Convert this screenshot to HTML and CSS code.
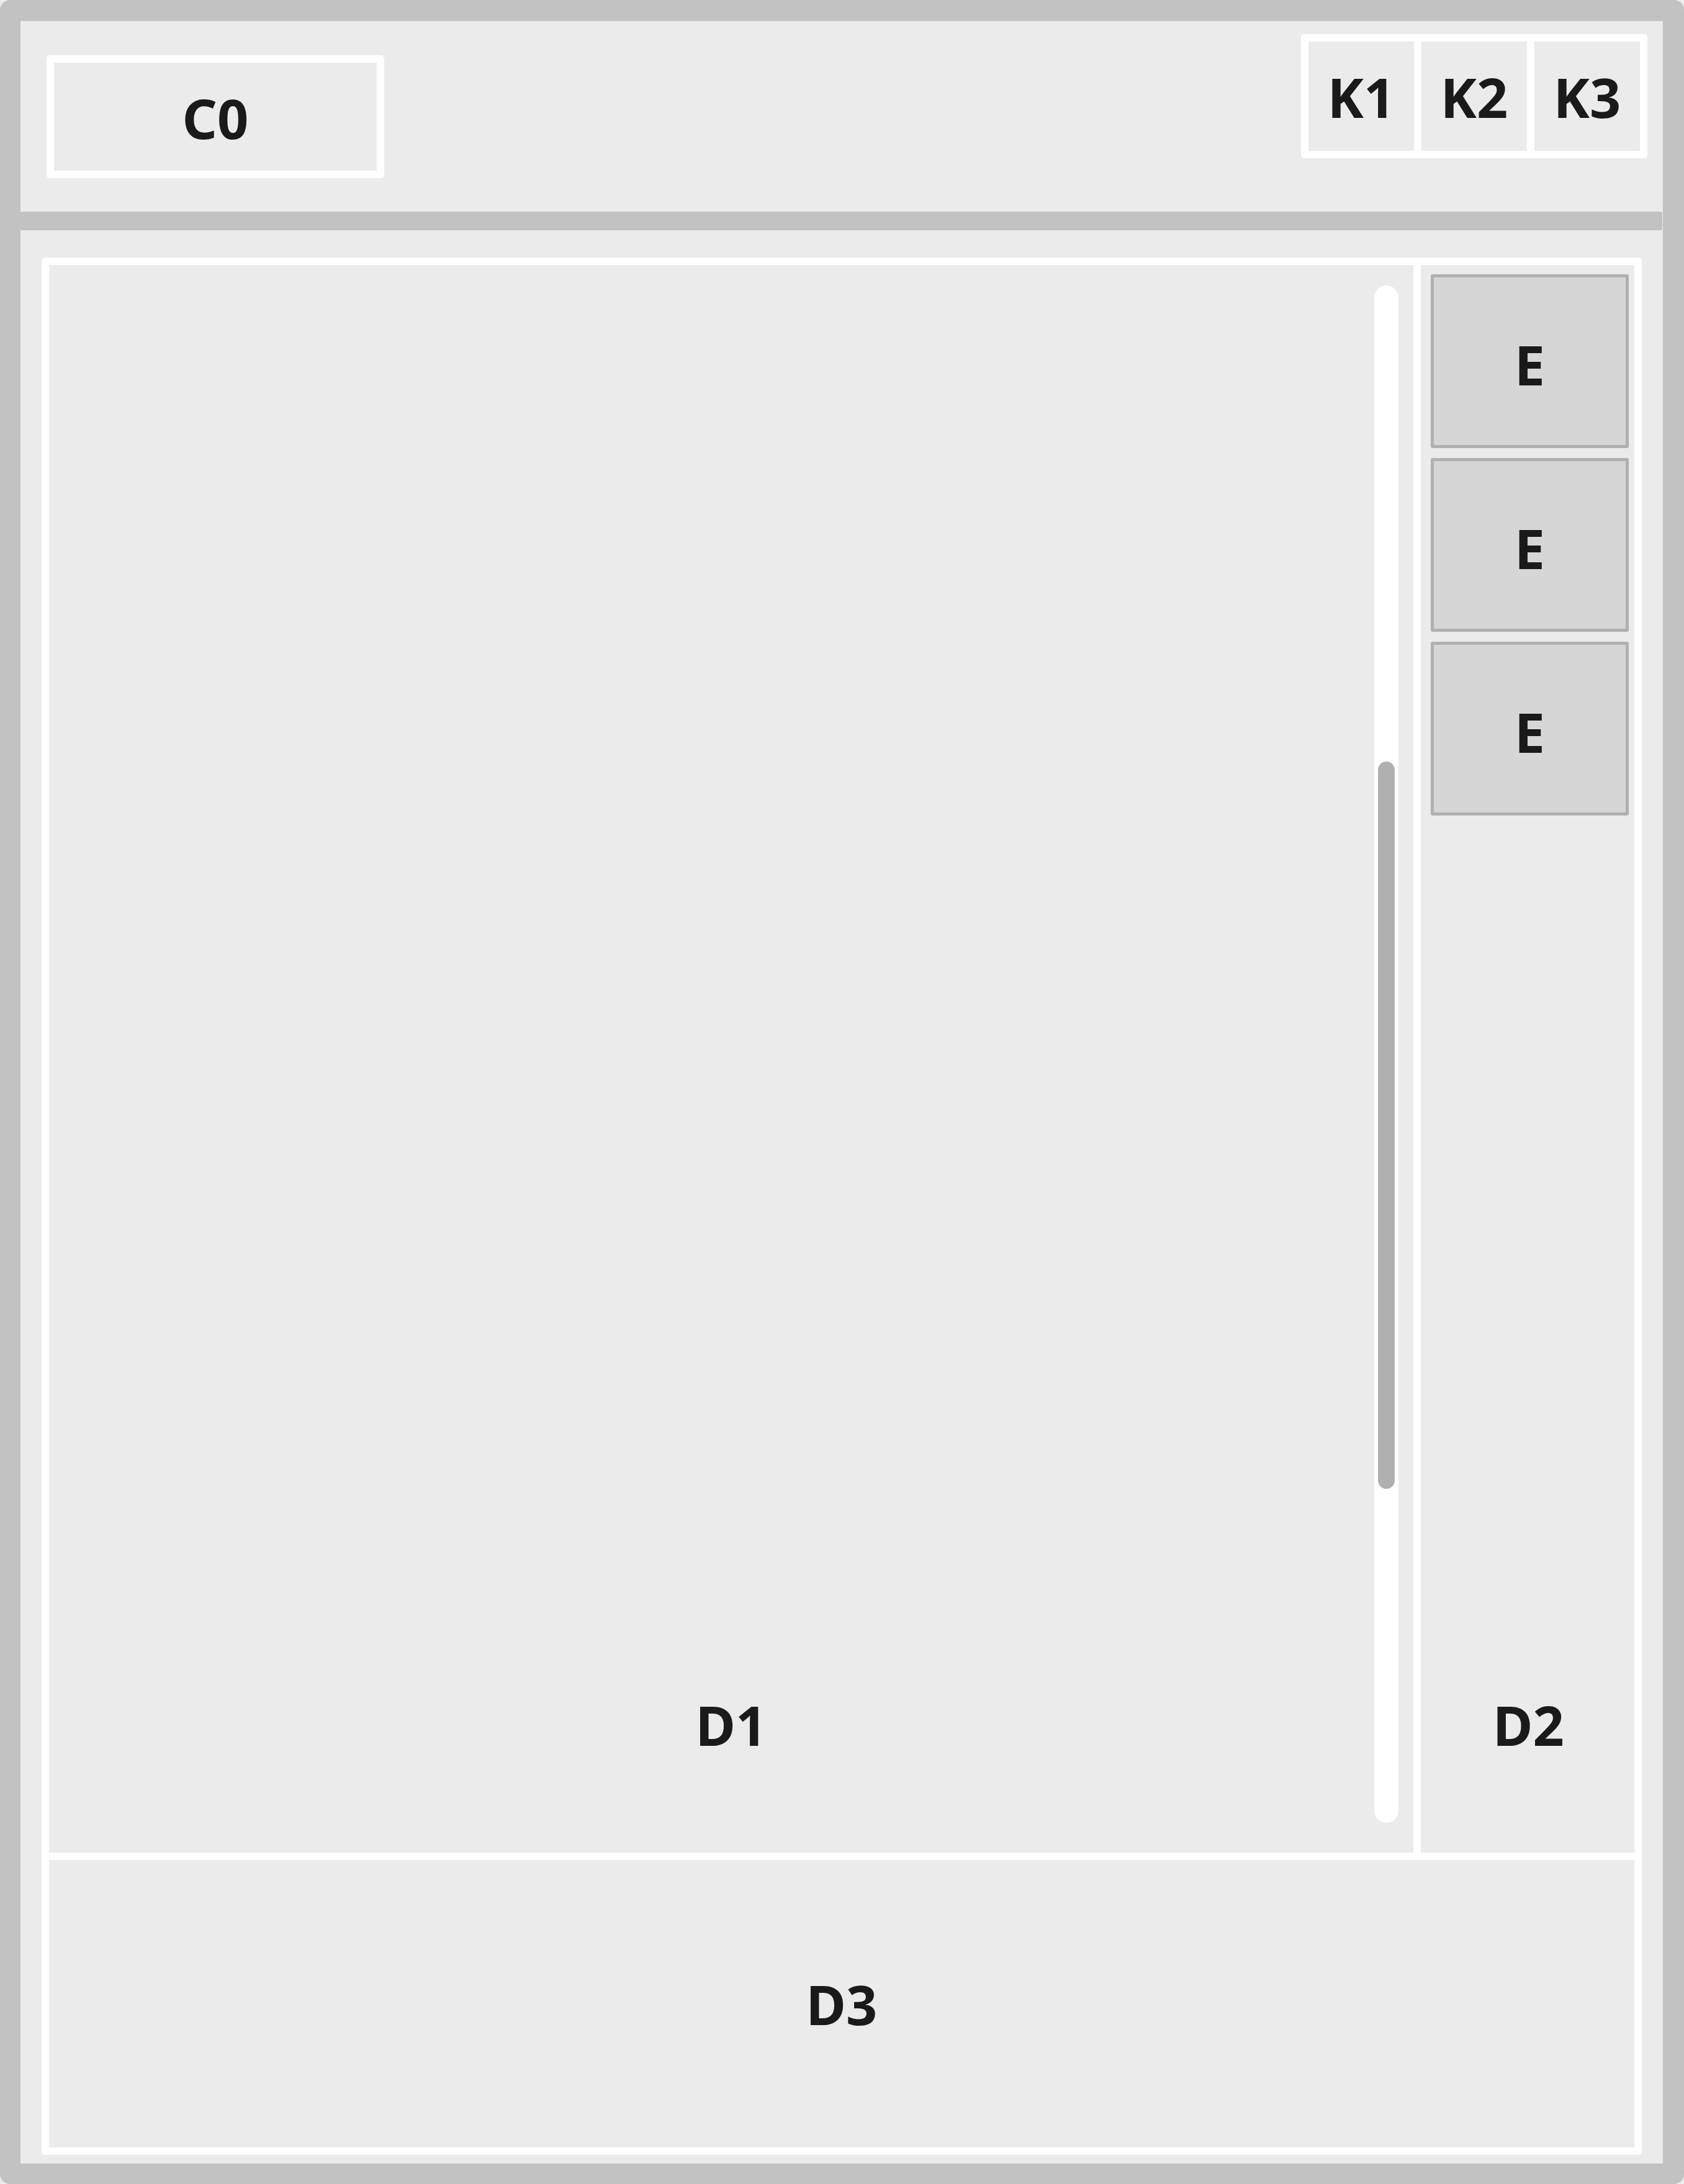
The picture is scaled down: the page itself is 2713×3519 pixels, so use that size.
FILE: index.html
```html
<!DOCTYPE html>
<html lang="en">
<head>
<meta charset="utf-8">
<title>Wireframe</title>
<link rel="stylesheet" href="styles.css">
</head>
<body>
<div class="frame">
  <header class="header">
    <div class="c0 label">C0</div>
    <div class="kgroup">
      <div class="kcell label">K1</div>
      <div class="kcell label">K2</div>
      <div class="kcell label">K3</div>
    </div>
  </header>
  <div class="bar"></div>
  <main class="main">
    <section class="d1">
      <div class="panel-label label">D1</div>
      <div class="track"><div class="thumb"></div></div>
    </section>
    <aside class="d2">
      <div class="ebox label">E</div>
      <div class="ebox label">E</div>
      <div class="ebox label">E</div>
      <div class="panel-label d2-label label">D2</div>
    </aside>
    <section class="d3">
      <div class="label">D3</div>
    </section>
  </main>
</div>
</body>
</html>
```

FILE: styles.css
```css
html, body {
  margin: 0;
  padding: 0;
  background: #ebebeb;
}

.frame {
  width: 2713px;
  height: 3519px;
  box-sizing: border-box;
  border-style: solid;
  border-color: #c2c2c2;
  border-width: 34px 34px 33px 33px;
  border-radius: 16px;
  background: #ebebeb;
  display: flex;
  flex-direction: column;
}

.label {
  font-family: "Noto Sans", "Open Sans", sans-serif;
  font-weight: 700;
  font-size: 88px;
  line-height: 1;
  color: #1a1a1a;
}

.header {
  height: 307px;
  flex: none;
  display: flex;
  justify-content: space-between;
  align-items: flex-start;
  padding: 0 25px 0 42px;
}

.c0 {
  margin-top: 55px;
  width: 544px;
  height: 198px;
  box-sizing: border-box;
  border: 12px solid #ffffff;
  border-radius: 5px;
  padding-top: 4px;
  display: flex;
  align-items: center;
  justify-content: center;
}

.kgroup {
  margin-top: 21px;
  width: 558px;
  height: 200px;
  box-sizing: border-box;
  padding: 12px;
  gap: 12px;
  background: #ffffff;
  border-radius: 5px;
  display: flex;
}

.kcell {
  flex: 1;
  background: #ebebeb;
  padding-top: 2px;
  display: flex;
  align-items: center;
  justify-content: center;
}

.bar {
  flex: none;
  height: 30px;
  margin-right: 1px;
  background: #c2c2c2;
  border-radius: 3px;
}

.main {
  flex: none;
  margin: 44px 34px 0 34px;
  height: 3057px;
  box-sizing: border-box;
  padding: 12px;
  background: #ffffff;
  border-radius: 5px;
  display: grid;
  grid-template-columns: 1fr 344px;
  grid-template-rows: 1fr 463px;
  gap: 12px;
}

.d1 {
  position: relative;
  background: #ebebeb;
  display: flex;
  flex-direction: column;
  justify-content: flex-end;
  align-items: center;
}

.panel-label {
  padding-bottom: 162px;
}

.track {
  position: absolute;
  top: 33px;
  right: 24px;
  width: 39px;
  height: 2477px;
  background: #ffffff;
  border-radius: 20px;
}

.thumb {
  position: absolute;
  top: 767px;
  left: 6px;
  width: 27px;
  height: 1172px;
  background: #b0b0b0;
  border-radius: 14px;
}

.d2 {
  background: #ebebeb;
  display: flex;
  flex-direction: column;
  gap: 16px;
  padding: 15px 9px 0 16px;
}

.ebox {
  flex: none;
  height: 280px;
  box-sizing: border-box;
  border: 5px solid #b0b0b0;
  border-radius: 3px;
  background: #d6d6d6;
  padding-top: 9px;
  display: flex;
  align-items: center;
  justify-content: center;
}

.d2-label {
  margin-top: auto;
  text-align: center;
  margin-left: -4px;
}

.d3 {
  grid-column: 1 / 3;
  background: #ebebeb;
  display: flex;
  align-items: center;
  justify-content: center;
}
```
